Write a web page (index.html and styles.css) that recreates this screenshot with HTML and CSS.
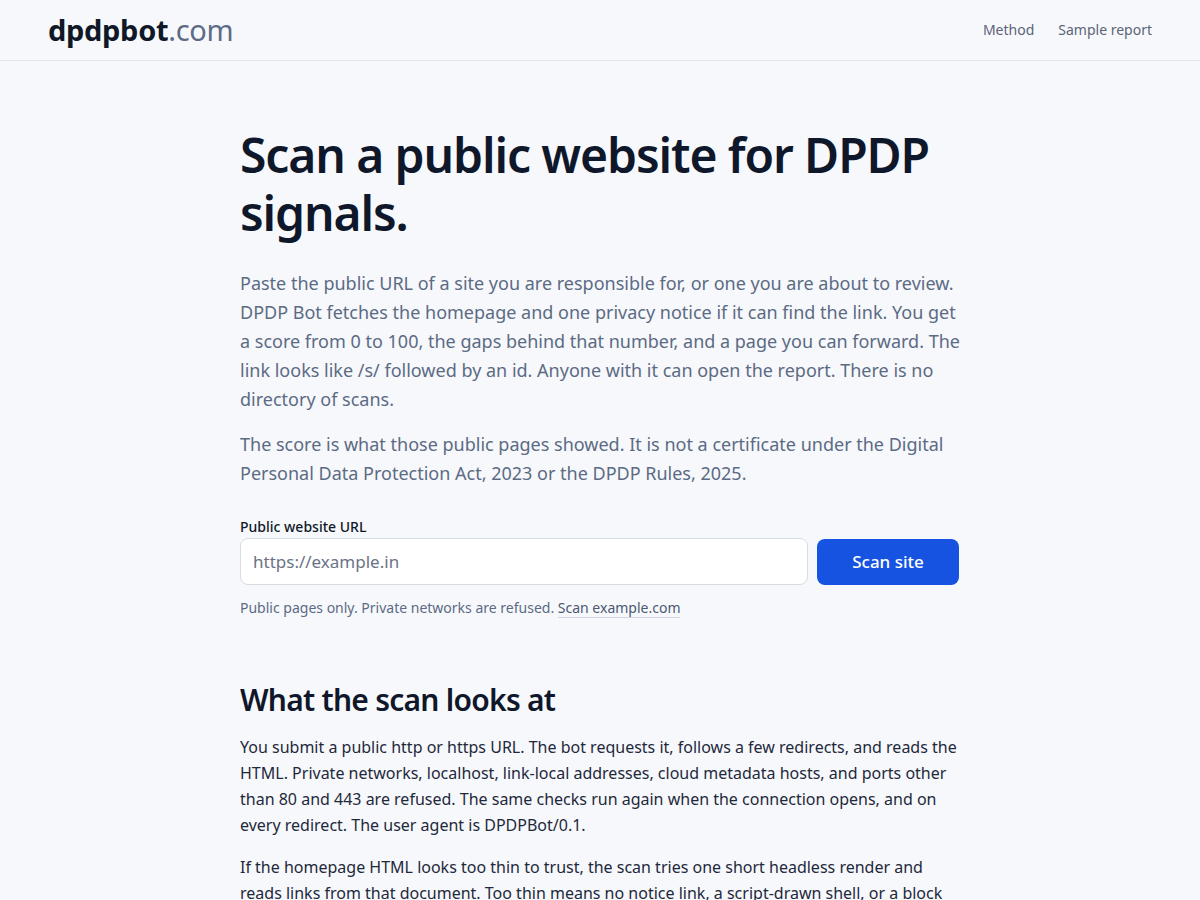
FILE: index.html
```html
<!DOCTYPE html>
<html lang="en">
<head>
<meta charset="utf-8">
<title>dpdpbot.com</title>
<link rel="stylesheet" href="styles.css">
</head>
<body>
<header class="site-header">
  <a class="logo" href="#"><span class="logo-main">dpdpbot</span><span class="logo-tld">.com</span></a>
  <nav class="nav">
    <a href="#">Method</a>
    <a href="#">Sample report</a>
  </nav>
</header>
<main class="main">
  <h1 class="title">Scan a public website for DPDP signals.</h1>
  <p class="lead">Paste the public URL of a site you are responsible for, or one you are about to review. DPDP Bot fetches the homepage and one privacy notice if it can find the link. You get a score from 0 to 100, the gaps behind that number, and a page you can forward. The link looks like /s/ followed by an id. Anyone with it can open the report. There is no directory of scans.</p>
  <p class="lead">The score is what those public pages showed. It is not a certificate under the Digital Personal Data Protection Act, 2023 or the DPDP Rules, 2025.</p>
  <form class="scan-form">
    <label class="label" for="url">Public website URL</label>
    <div class="row">
      <input class="input" id="url" type="text" placeholder="https://example.in">
      <button class="button" type="button">Scan site</button>
    </div>
    <p class="hint">Public pages only. Private networks are refused. <a class="hint-link" href="#">Scan example.com</a></p>
  </form>
  <section class="section">
    <h2 class="section-title">What the scan looks at</h2>
    <p class="body">You submit a public http or https URL. The bot requests it, follows a few redirects, and reads the HTML. Private networks, localhost, link-local addresses, cloud metadata hosts, and ports other than 80 and 443 are refused. The same checks run again when the connection opens, and on every redirect. The user agent is DPDPBot/0.1.</p>
    <p class="body">If the homepage HTML looks too thin to trust, the scan tries one short headless render and reads links from that document. Too thin means no notice link, a script-drawn shell, or a block page. The render is capped in time and size, and it never follows a link on its own.</p>
  </section>
</main>
</body>
</html>
```
FILE: styles.css
```css
* { box-sizing: border-box; }
html, body { margin: 0; padding: 0; }
body {
  background: #f7f8fb;
  font-family: "Noto Sans", "Open Sans", sans-serif;
  color: #1e293b;
}
a { text-decoration: none; }
.site-header {
  height: 61px;
  border-bottom: 1px solid #e1e5eb;
  display: flex;
  align-items: center;
  justify-content: space-between;
  padding: 0 48px;
}
.logo {
  font-size: 29px;
  line-height: 1;
  letter-spacing: -0.3px;
  padding-bottom: 2px;
}
.logo-main { color: #101828; font-weight: 700; }
.logo-tld { color: #5d6b85; font-weight: 400; }
.nav { display: flex; gap: 24px; padding-bottom: 2px; }
.nav a { color: #5b6478; font-size: 14px; }
.main {
  width: 720px;
  margin: 0 auto;
  padding-top: 65px;
}
.title {
  margin: 0 0 28px;
  font-size: 48px;
  line-height: 1.2;
  font-weight: 600;
  color: #0f172a;
  letter-spacing: -1.1px;
}
.lead {
  margin: 0 0 16px;
  font-size: 18px;
  line-height: 29px;
  color: #5b6b84;
}
.scan-form { margin-top: 28px; }
.label {
  display: block;
  font-size: 14px;
  line-height: 20px;
  font-weight: 500;
  color: #101828;
  margin-bottom: 1px;
  padding-top: 1px;
}
.row { display: flex; gap: 9px; align-items: center; }
.input {
  flex: 1;
  height: 47px;
  border: 1px solid #d6dce4;
  border-radius: 8px;
  background: #ffffff;
  padding: 0 12px;
  font-family: inherit;
  font-size: 17px;
  color: #1e293b;
}
.input::placeholder { color: #6b7385; }
.button {
  width: 142px;
  height: 46px;
  border: 0;
  border-radius: 8px;
  background: #1553e0;
  color: #ffffff;
  font-family: inherit;
  font-size: 17px;
  font-weight: 500;
  margin-right: 1px;
}
.hint {
  margin: 13px 0 0;
  font-size: 14px;
  line-height: 20px;
  color: #5b6b84;
}
.hint-link {
  color: #4b5871;
  border-bottom: 1px solid #cfd6e0;
}
.section { margin-top: 63px; }
.section-title {
  margin: 0 0 15px;
  font-size: 30px;
  line-height: 38px;
  font-weight: 600;
  color: #0f172a;
  letter-spacing: -0.75px;
}
.body {
  margin: 0 0 16px;
  font-size: 16px;
  line-height: 26px;
  color: #1e293b;
}
```
